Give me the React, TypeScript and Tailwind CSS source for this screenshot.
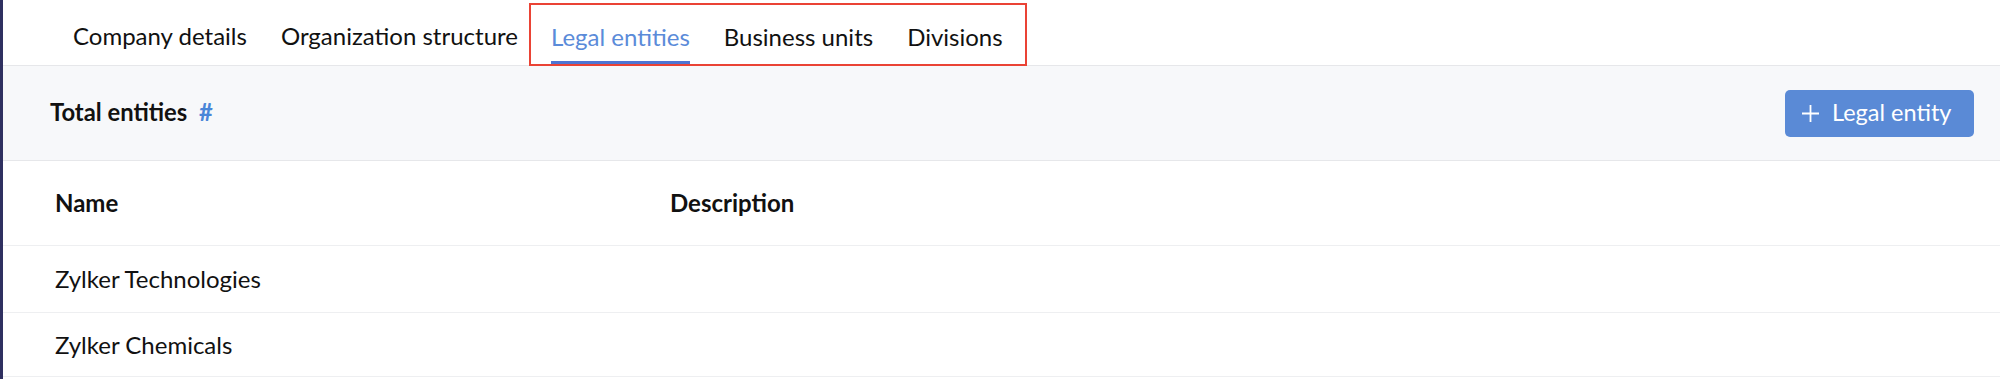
import React from 'react';

const tabs = ['Company details', 'Organization structure'];
const marked = ['Legal entities', 'Business units', 'Divisions'];

const Tab = ({label, active}: {label: string; active?: boolean}) => (
    <div className="relative flex h-full items-center pt-[4px]">
        <span className={active ? 'text-[#5b8bd9]' : 'text-[#111111]'}>{label}</span>
        {active && <span className="absolute bottom-0 left-0 right-0 h-[3px] bg-[#4f74d2]"/>}
    </div>
);

export default function App() {
    return (
        <div className="flex min-h-[379px] w-full bg-white" style={{fontFamily: 'Lato, "Open Sans", sans-serif'}}>
            <div className="w-[3px] shrink-0 bg-[#2f3060]"/>
            <div className="flex-1">
                {/* tabs */}
                <div className="flex h-[66px] items-stretch border-b border-[#e6e7ea] pl-[70px] text-[24px]">
                    <div className="flex items-stretch gap-[34px] pt-[3px]">
                        {tabs.map(t => <Tab key={t} label={t}/>)}
                    </div>
                    <div className="relative z-10 mb-[-1px] ml-[11px] mt-[3px] flex items-stretch gap-[34px] border-2 border-[#ea4335] pl-[20px] pr-[22px]">
                        <Tab label={marked[0]} active/>
                        <Tab label={marked[1]}/>
                        <Tab label={marked[2]}/>
                    </div>
                </div>

                {/* toolbar */}
                <div className="flex h-[95px] items-center justify-between border-b border-[#e6e7ea] bg-[#f7f8fa] pl-[47px] pr-[26px]">
                    <div className="text-[23.8px] font-bold text-[#111111]">
                        Total entities <span className="ml-[6px] text-[#4a86d8]">#</span>
                    </div>
                    <button className="flex h-[47px] w-[189px] items-center gap-[13px] rounded-[5px] bg-[#5a8ad6] pl-[17px] text-[23.5px] text-white">
                        <svg width="17" height="17" viewBox="0 0 17 17" fill="none" stroke="currentColor" strokeWidth="1.8">
                            <path d="M8.5 0v17M0 8.5h17"/>
                        </svg>
                        <span>Legal entity</span>
                    </button>
                </div>

                {/* table */}
                <div className="text-[24px] text-[#111111]">
                    <div className="flex h-[85px] items-center border-b border-[#eeeff1] pl-[52px] font-bold">
                        <div className="w-[615px]">Name</div>
                        <div>Description</div>
                    </div>
                    <div className="flex h-[67px] items-center border-b border-[#eeeff1] pl-[52px]">Zylker Technologies</div>
                    <div className="flex h-[64px] items-center border-b border-[#eeeff1] pl-[52px]">Zylker Chemicals</div>
                </div>
            </div>
        </div>
    );
}
